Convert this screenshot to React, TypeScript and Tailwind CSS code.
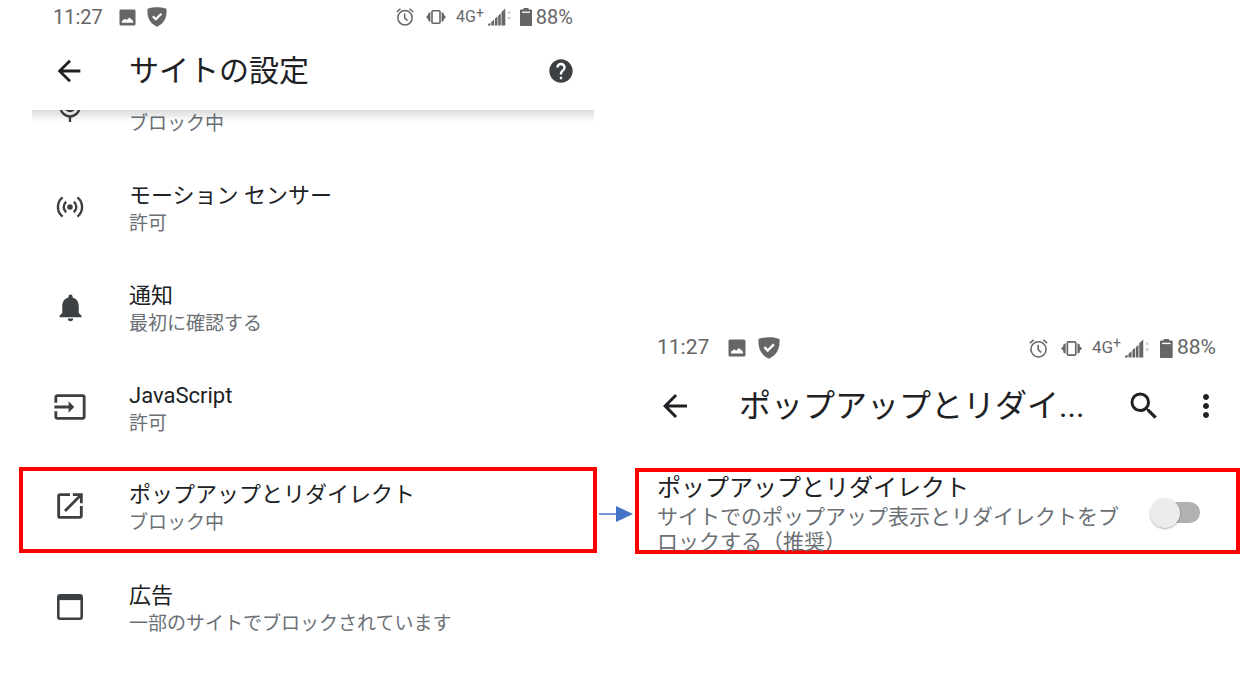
import type { ReactNode } from 'react'
import clsx from 'clsx'
import {
  MdArrowBack,
  MdHelp,
  MdInput,
  MdMoreVert,
  MdNotifications,
  MdOpenInNew,
  MdSearch,
} from 'react-icons/md'

type Setting = {
  title: string
  status: string
  icon: ReactNode
  highlighted?: boolean
}

const settings: Setting[] = [
  { title: 'モーション センサー', status: '許可', icon: <MotionIcon /> },
  { title: '通知', status: '最初に確認する', icon: <MdNotifications size={33} /> },
  { title: 'JavaScript', status: '許可', icon: <MdInput size={34} /> },
  {
    title: 'ポップアップとリダイレクト',
    status: 'ブロック中',
    icon: <MdOpenInNew size={34} />,
    highlighted: true,
  },
  { title: '広告', status: '一部のサイトでブロックされています', icon: <WindowIcon /> },
]

function MotionIcon() {
  return (
    <svg width="34" height="34" viewBox="0 0 34 34" fill="none" stroke="currentColor" strokeWidth="2.4">
      <circle cx="17" cy="17" r="2.8" fill="currentColor" stroke="none" />
      <path d="M13.200 11.800a6.600 6.600 0 0 0 0 10.400M20.800 11.800a6.600 6.600 0 0 1 0 10.400" />
      <path d="M9.600 7.400a12.200 12.200 0 0 0 0 19.200M24.400 7.400a12.200 12.200 0 0 1 0 19.200" />
    </svg>
  )
}

function MicIcon() {
  return (
    <svg width="34" height="34" viewBox="0 0 34 34" fill="none" stroke="currentColor" strokeWidth="2.4">
      <rect x="12.500" y="1" width="9" height="20" rx="4.500" />
      <path d="M7.500 17a9.500 9.500 0 0 0 19 0M17 26v6" />
    </svg>
  )
}

function WindowIcon() {
  return (
    <svg width="34" height="34" viewBox="0 0 34 34" fill="none" stroke="currentColor">
      <rect x="5.300" y="5.300" width="23.400" height="23.400" rx="2" strokeWidth="2.600" />
      <path d="M5 7.600h24" strokeWidth="5" />
    </svg>
  )
}

function PhotoIcon({ className }: { className: string }) {
  return (
    <svg className={className} viewBox="0 0 18 18">
      <rect x="0.500" y="0.500" width="17" height="17" rx="1.500" fill="currentColor" />
      <path d="M3 14.500v-1.800l3.200-2.500 2 1.500 2.800-2.700 4 3.700v1.800z" fill="#fff" />
    </svg>
  )
}

function ShieldIcon({ className }: { className: string }) {
  return (
    <svg className={className} viewBox="0 0 20 20">
      <path
        d="M.5 1.800C4 .5 7 .2 10 .2s6 .3 9.500 1.600c.5 6.700-.8 14-9.500 18C1.300 15.800 0 8.500.5 1.800z"
        fill="currentColor"
      />
      <path d="M5.800 9.300l3 3 5.600-5.600" fill="none" stroke="#fff" strokeWidth="2.200" />
    </svg>
  )
}

function AlarmIcon({ className }: { className: string }) {
  return (
    <svg className={className} viewBox="0 0 18 18" fill="none" stroke="currentColor" strokeWidth="1.500">
      <circle cx="9" cy="9.800" r="7.200" />
      <path d="M8.700 5.500v4.500l2.800 2.600M.8 4L4.400.9M17.200 4L13.600.9" />
    </svg>
  )
}

function VibrateIcon({ className }: { className: string }) {
  return (
    <svg className={className} viewBox="0 0 20 18">
      <rect x="6" y="2.700" width="8" height="12.600" rx="1" fill="none" stroke="currentColor" strokeWidth="1.600" />
      <path
        d="M4.400 4v10l-2.200-1.200v-1.600L0 9l2.200-2.200V5.200zM15.600 4v10l2.200-1.200v-1.600L20 9l-2.200-2.200V5.200z"
        fill="currentColor"
      />
    </svg>
  )
}

function SignalIcon({ className }: { className: string }) {
  return (
    <svg className={className} viewBox="0 0 24 18">
      <path
        d="M0 17.500v-1.500l2.500-1v2.500zM3.300 17.500v-3.500l2.900-2.500v6zM7 17.500v-7l2.500-2v9zM10.200 17.500V7.700L12.800 5.500v12zM13.500 17.500V4L17.300.5v17z"
        fill="currentColor"
      />
      <path d="M19.200 5.500l1.900-3 1.900 3zM19.200 9l1.900 3 1.900-3z" fill="#cacaca" />
    </svg>
  )
}

function BatteryIcon({ className }: { className: string }) {
  return (
    <svg className={className} viewBox="0 0 12 18">
      <path
        d="M3.500 0h5v1.500H11c.6 0 1 .4 1 1V17c0 .6-.4 1-1 1H1c-.6 0-1-.4-1-1V2.500c0-.6.400-1 1-1h2.500z"
        fill="currentColor"
      />
      <path d="M2 4.200h8" stroke="#fff" strokeWidth="1.300" />
    </svg>
  )
}

function StatusBar({ large = false }: { large?: boolean }) {
  const icon = large ? 'h-[19px]' : 'h-[18px]'
  return (
    <div
      className={clsx(
        'flex items-center pr-6 text-[#666]',
        large ? 'h-9 pl-[22px] text-[21px]' : 'h-[34px] pl-[34px] text-[20px]',
      )}
    >
      <span>11:27</span>
      <PhotoIcon className={large ? 'ml-[19px] h-[18px]' : 'ml-4 h-[17px]'} />
      <ShieldIcon className={large ? 'ml-3 h-[22px]' : 'ml-[11px] h-5'} />
      <div className="ml-auto flex items-center">
        <AlarmIcon className={icon} />
        <VibrateIcon className={clsx(icon, large ? 'ml-[13px]' : 'ml-3')} />
        <span className={clsx('ml-[10px] flex', large ? 'text-[17px]' : 'text-[16px]')}>
          4G<span className="-mt-0.5 text-[14px]">+</span>
        </span>
        <SignalIcon className={clsx('ml-1', large ? 'h-[19px]' : 'h-[18px]')} />
        <BatteryIcon className={clsx(icon, large ? 'ml-[10px]' : 'ml-2')} />
        <span className="ml-1">88%</span>
      </div>
    </div>
  )
}

function SettingRow({ title, status, icon, highlighted }: Setting) {
  return (
    <button
      type="button"
      className={clsx(
        'flex w-full shrink-0 items-center text-left',
        highlighted ? 'mt-[10px] mb-1 h-[86px] border-4 border-[#fe0000] pb-2 pl-[30px]' : 'h-[100px] pl-[34px]',
      )}
    >
      <span className="flex w-[34px] shrink-0 justify-center text-[#3c4043]">{icon}</span>
      <span className="ml-[42px] flex flex-col pt-[6px]">
        <span className="h-7 text-[22px] leading-7 text-[#202124]">{title}</span>
        <span className="text-[19px] leading-7 text-[#6b7075]">{status}</span>
      </span>
    </button>
  )
}

function SiteSettings() {
  return (
    <section>
      <StatusBar />
      <header className="relative z-10 mr-[3px] ml-[13px] flex h-[76px] items-center bg-white pr-[19px] pb-0.5 pl-5 text-[#202124]">
        <button type="button" aria-label="戻る">
          <MdArrowBack size={34} />
        </button>
        <h1 className="ml-[43px] text-[30px] leading-10">サイトの設定</h1>
        <button type="button" aria-label="ヘルプ" className="ml-auto text-[#3c4043]">
          <MdHelp size={28} />
        </button>
        <div className="absolute inset-x-0 top-full h-3 bg-linear-to-b from-[#00000024] to-transparent" />
      </header>

      {/* row scrolled halfway under the header */}
      <div className="flex h-[47px] flex-col justify-end overflow-hidden">
        <SettingRow title="" status="ブロック中" icon={<MicIcon />} />
      </div>
      {settings.map((s) => (
        <SettingRow key={s.title} {...s} />
      ))}
    </section>
  )
}

function PopupSettings() {
  return (
    <section className="pt-[330px]">
      <StatusBar large />
      <header className="flex h-20 items-center pr-4 pl-[22px] text-[#202124]">
        <button type="button" aria-label="戻る">
          <MdArrowBack size={36} />
        </button>
        <h2 className="ml-[46px] text-[32px] leading-10 whitespace-nowrap">ポップアップとリダイ...</h2>
        <button type="button" aria-label="検索" className="ml-auto">
          <MdSearch size={36} />
        </button>
        <button type="button" aria-label="その他" className="ml-[26px]">
          <MdMoreVert size={36} />
        </button>
      </header>

      <div className="mt-[22px] flex h-[86px] items-start border-4 border-[#fe0000] pr-9 pl-[18px]">
        <label htmlFor="popups" className="flex w-[464px] flex-col gap-0.5 pt-px">
          <span className="text-[24px] leading-[30px] text-[#202124]">ポップアップとリダイレクト</span>
          <span className="text-[21px] leading-[25px] text-[#6b7075]">
            サイトでのポップアップ表示とリダイレクトをブロックする（推奨）
          </span>
        </label>
        <input
          id="popups"
          type="checkbox"
          className="relative mt-[30px] ml-auto h-[21px] w-[46px] shrink-0 appearance-none rounded-full bg-[#b1b1b1] before:absolute before:-top-1 before:-left-1 before:size-[30px] before:rounded-full before:bg-[#ececec] before:shadow-[0_1px_2px_rgba(0,0,0,0.3)] checked:before:left-5"
        />
      </div>
    </section>
  )
}

export default function App() {
  return (
    <main
      className="grid grid-cols-[578fr_38px_605fr] bg-white px-[19px] font-['Roboto','Noto_Sans_CJK_JP',sans-serif]"
      lang="ja"
    >
      <SiteSettings />
      <svg className="mt-[505px] h-[18px] w-[38px]" viewBox="0 0 38 18">
        <path d="M2 9h18" stroke="#4472c4" strokeWidth="1.500" />
        <path d="M19 1l17 8-17 8z" fill="#4472c4" />
      </svg>
      <PopupSettings />
    </main>
  )
}
